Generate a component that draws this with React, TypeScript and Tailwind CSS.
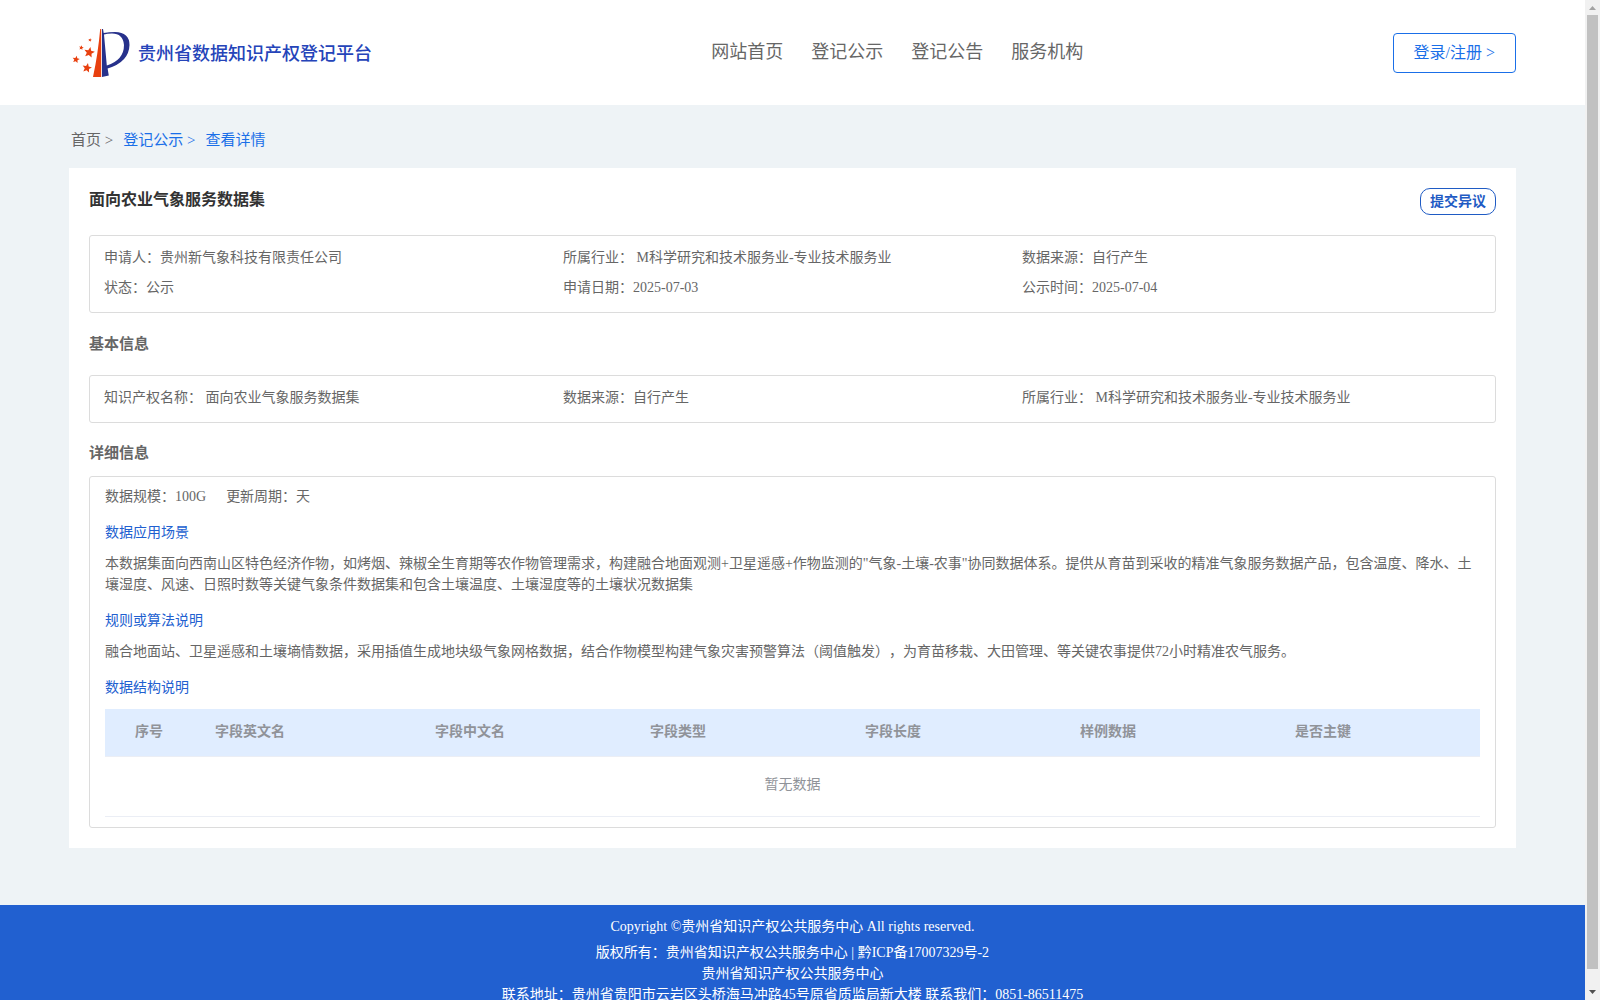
type Field = {
  label: string;
  value: string;
};

const navItems = ["网站首页", "登记公示", "登记公告", "服务机构"];

const summary: Field[] = [
  { label: "申请人：", value: "贵州新气象科技有限责任公司" },
  { label: "所属行业：", value: " M科学研究和技术服务业-专业技术服务业" },
  { label: "数据来源：", value: "自行产生" },
  { label: "状态：", value: "公示" },
  { label: "申请日期：", value: "2025-07-03" },
  { label: "公示时间：", value: "2025-07-04" },
];

const basicInfo: Field[] = [
  { label: "知识产权名称：", value: " 面向农业气象服务数据集" },
  { label: "数据来源：", value: "自行产生" },
  { label: "所属行业：", value: " M科学研究和技术服务业-专业技术服务业" },
];

const columns = [
  { title: "序号", className: "w-[100px] pl-[30px]" },
  { title: "字段英文名", className: "w-[220px] pl-[10px]" },
  { title: "字段中文名", className: "w-[215px] pl-[10px]" },
  { title: "字段类型", className: "w-[215px] pl-[10px]" },
  { title: "字段长度", className: "w-[215px] pl-[10px]" },
  { title: "样例数据", className: "w-[215px] pl-[10px]" },
  { title: "是否主键", className: "pl-[10px]" },
];

const Star = ({ x, y, r }: { x: number; y: number; r: number }) => {
  const points = Array.from({ length: 10 }, (_, i) => {
    const radius = i % 2 === 0 ? r : r * 0.45;
    const angle = (Math.PI / 5) * i - Math.PI / 2 + 0.2;
    return `${x + radius * Math.cos(angle)},${y + radius * Math.sin(angle)}`;
  }).join(" ");
  return <polygon points={points} fill="#e8400f" />;
};

const Logo = () => (
  <svg width="58" height="50" viewBox="0 0 58 50" aria-hidden="true">
    <path d="M28.200 1H29.200V49H21Q26 26 28.200 1Z" fill="#e8400f" />
    <path
      d="M30 1H31L31.700 5Q37 4 43 4Q57.500 4.500 57.500 17Q57 34 35.600 40.500L36.800 47.500L30 49Z M32 6.500L34.800 37.500Q52 32 52 17Q51 5.500 40 5.500Q35 5.500 32 6.500Z"
      fill="#27318b"
      fillRule="evenodd"
    />
    <Star x={17.3} y={24.5} r={5.6} />
    <Star x={15} y={40} r={5} />
    <Star x={4} y={31.5} r={3.8} />
    <Star x={9.3} y={19.7} r={2.5} />
    <Star x={18} y={12} r={1.9} />
  </svg>
);

const FieldGrid = ({ items }: { items: Field[] }) => (
  <dl className="grid grid-cols-3 rounded-[3px] border border-[#dcdcdc] px-[14px] pt-[6px] pb-[10px]">
    {items.map((item) => (
      <div key={item.label} className="flex h-[30px] items-center whitespace-pre">
        <dt>{item.label}</dt>
        <dd>{item.value}</dd>
      </div>
    ))}
  </dl>
);

const Header = () => (
  <header className="flex h-[105px] items-center justify-between bg-white px-[69px]">
    <a href="#" className="flex items-center gap-2 pr-[30px] pl-[3px]">
      <Logo />
      <span className="pt-1 text-[18px] font-medium text-[#2544b9]">贵州省数据知识产权登记平台</span>
    </a>
    <nav className="flex gap-7 text-[18px] text-[#666]">
      {navItems.map((item) => (
        <a key={item} href="#">
          {item}
        </a>
      ))}
    </nav>
    <button
      type="button"
      className="h-10 rounded border border-[#1a6fe8] px-[20px] text-[16px] text-[#1a6fe8]"
    >
      登录/注册 &gt;
    </button>
  </header>
);

const DataTable = () => (
  <table className="w-full table-fixed border-collapse text-left text-[#909399]">
    <thead className="bg-[#e0edff]">
      <tr className="h-[47px] border-b border-[#ebeef5]">
        {columns.map((col) => (
          <th key={col.title} scope="col" className={`pb-[2px] font-bold ${col.className}`}>
            {col.title}
          </th>
        ))}
      </tr>
    </thead>
    <tbody>
      <tr className="h-[60px] border-b border-[#ebeef5]">
        <td colSpan={columns.length} className="pb-[3px] text-center">
          暂无数据
        </td>
      </tr>
    </tbody>
  </table>
);

const Footer = () => (
  <footer className="bg-[#2160d0] pt-[11px] pb-5 text-center text-[14px] leading-[21px] text-white">
    <p className="mb-[5px]">Copyright ©贵州省知识产权公共服务中心 All rights reserved.</p>
    <p>
      版权所有：贵州省知识产权公共服务中心 | <a href="#">黔ICP备17007329号-2</a>
    </p>
    <p>贵州省知识产权公共服务中心</p>
    <p>联系地址：贵州省贵阳市云岩区头桥海马冲路45号原省质监局新大楼 联系我们：0851-86511475</p>
  </footer>
);

const ScrollBar = () => (
  <div className="flex w-[15px] shrink-0 flex-col items-center bg-[#f1f1f1]" aria-hidden="true">
    <svg className="h-[15px] w-[15px] shrink-0" viewBox="0 0 15 15">
      <path d="M4 10h7L7.500 6z" fill="#a3a3a3" />
    </svg>
    <div className="w-[11px] flex-1 bg-[#c1c1c1]" />
    <svg className="h-[31px] w-[15px] shrink-0" viewBox="0 0 15 31">
      <path d="M4 21h7l-3.500 4z" fill="#505050" />
    </svg>
  </div>
);

export default function App() {
  return (
    <div className="flex h-screen bg-[#eef3f6] font-['Liberation_Serif','Noto_Sans_CJK_SC',serif] text-[14px] leading-[21px] text-[#666] [text-spacing-trim:space-all]">
      <div className="min-w-0 flex-1 overflow-y-auto [scrollbar-width:none]">
        <Header />
        <main className="px-[69px] pb-[57px]">
          <nav className="flex h-[63px] items-center gap-[10px] pt-[9px] pb-[2px] pl-[2px] text-[15px] text-[#1a6fe8]">
            <a href="#" className="text-[#666]">
              首页 &gt;
            </a>
            <a href="#">登记公示 &gt;</a>
            <a href="#">查看详情</a>
          </nav>
          <section className="bg-white p-5">
            <div className="mb-5 flex h-[27px] items-start justify-between">
              <h1 className="pt-px text-[16px] font-bold text-[#333]">面向农业气象服务数据集</h1>
              <button
                type="button"
                className="h-[27px] rounded-[10px] border border-[#1f5bc4] px-[9px] pb-px text-[14px] font-bold text-[#1f5bc4]"
              >
                提交异议
              </button>
            </div>
            <FieldGrid items={summary} />
            <h2 className="flex h-[62px] items-center text-[15px] font-bold">基本信息</h2>
            <FieldGrid items={basicInfo} />
            <h2 className="flex h-[53px] items-center pt-2 text-[15px] font-bold">详细信息</h2>
            <div className="rounded-[3px] border border-[#dcdcdc] px-[15px] pt-[9px] pb-[10px]">
              <p className="flex gap-5">
                <span>数据规模：100G</span>
                <span>更新周期：天</span>
              </p>
              <h3 className="mt-[15px] mb-[10px] text-[#2160d0]">数据应用场景</h3>
              <p>
                本数据集面向西南山区特色经济作物，如烤烟、辣椒全生育期等农作物管理需求，构建融合地面观测+卫星遥感+作物监测的"气象-土壤-农事"协同数据体系。提供从育苗到采收的精准气象服务数据产品，包含温度、降水、土壤湿度、风速、日照时数等关键气象条件数据集和包含土壤温度、土壤湿度等的土壤状况数据集
              </p>
              <h3 className="mt-[15px] mb-[10px] text-[#2160d0]">规则或算法说明</h3>
              <p>
                融合地面站、卫星遥感和土壤墒情数据，采用插值生成地块级气象网格数据，结合作物模型构建气象灾害预警算法（阈值触发），为育苗移栽、大田管理、等关键农事提供72小时精准农气服务。
              </p>
              <h3 className="mt-[15px] mb-[11px] text-[#2160d0]">数据结构说明</h3>
              <DataTable />
            </div>
          </section>
        </main>
        <Footer />
      </div>
      <ScrollBar />
    </div>
  );
}
